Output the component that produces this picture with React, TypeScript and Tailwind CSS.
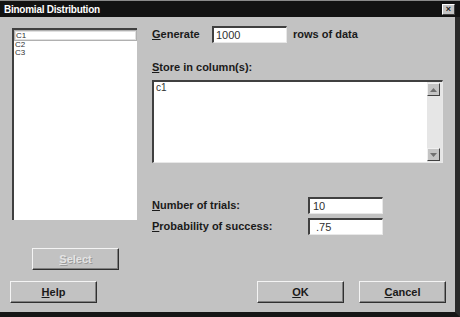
import React from "react"

const font = { fontFamily: '"Liberation Sans", Arial, sans-serif' }

const Sunken: React.FC<{ className?: string; children?: React.ReactNode }> = ({ className, children }) => (
    <div className={`border-t-2 border-l-2 border-t-[#404040] border-l-[#404040] border-b border-r border-b-[#e8e8e8] border-r-[#e8e8e8] bg-white ${className ?? ''}`}>
        {children}
    </div>
)

const Button: React.FC<{ label: string; hot: string; disabled?: boolean; className?: string }> = ({ label, hot, disabled, className }) => (
    <div className={`h-[22px] w-[87px] flex items-center justify-center border border-t-[#f4f4f4] border-l-[#f4f4f4] border-b-[#303030] border-r-[#303030] shadow-[inset_-1px_-1px_0_#808080] text-[11px] font-bold ${disabled ? 'text-[#e4e4e4] [text-shadow:1px_1px_0_#9a9a9a]' : 'text-[#1a1a1a]'} ${className ?? ''}`}>
        <span><span className="underline">{hot}</span>{label}</span>
    </div>
)

const Label: React.FC<{ hot: string; text: string; className?: string }> = ({ hot, text, className }) => (
    <span className={`text-[11px] font-bold text-[#1a1a1a] ${className ?? ''}`}><span className="underline">{hot}</span>{text}</span>
)

const ScrollArrow: React.FC<{ up?: boolean }> = ({ up }) => (
    <div className="w-[13px] h-[13px] bg-[#c4c4c4] border border-t-[#f0f0f0] border-l-[#f0f0f0] border-b-[#404040] border-r-[#404040] flex items-center justify-center">
        <svg width="7" height="4" viewBox="0 0 7 4">
            <path d={up ? "M3.5 0 L7 4 L0 4 Z" : "M0 0 L7 0 L3.5 4 Z"} fill="#707070" />
        </svg>
    </div>
)

export default function App() {
    return (
        <div style={font} className="w-[460px] h-[317px] bg-[#c2c2c2] flex flex-col overflow-hidden">
            <div className="h-[17px] shrink-0 bg-[#121212] flex items-center justify-between pl-[4px] pr-[5px] border-t border-t-[#8a8a8a]">
                <span className="text-white text-[10px] font-bold tracking-tight">Binomial Distribution</span>
                <div className="w-[13px] h-[11px] bg-[#c4c4c4] border border-t-white border-l-white border-b-[#404040] border-r-[#404040] flex items-center justify-center text-[9px] leading-none font-bold text-[#222]">×</div>
            </div>
            <div className="flex-1 flex border-r-[5px] border-r-[#2a2a2a] border-b-[5px] border-b-[#161616]">
                <div className="flex-1 flex flex-col pt-[9px]">
                    <div className="flex">
                        <div className="w-[139px] pl-[12px] flex flex-col">
                            <div className="mt-[2px] h-[192px] w-[125px] border-l-2 border-t-2 border-l-[#404040] border-t-[#404040] bg-white">
                                <div className="mx-[1px] mt-[1px] h-[9px] border border-[#e0e0e0] bg-white shadow-[0_0_0_1px_#b0b0b0] flex items-center">
                                    <span className="text-[8px] leading-none text-[#303030]">C1</span>
                                </div>
                                <div className="mt-[1px] text-[8px] leading-[8px] text-[#303030] pl-[1px]">C2</div>
                                <div className="text-[8px] leading-[8px] text-[#303030] pl-[1px]">C3</div>
                            </div>
                            <Button label="elect" hot="S" disabled className="mt-[28px] ml-[20px]" />
                        </div>
                        <div className="ml-[13px] flex flex-col">
                            <div className="flex items-center h-[17px]">
                                <Label hot="G" text="enerate" className="w-[60px]" />
                                <Sunken className="w-[75px] h-[17px] flex items-center pl-[2px]">
                                    <span className="text-[11px] text-[#303030]">1000</span>
                                </Sunken>
                                <span className="ml-[6px] text-[11px] font-bold text-[#1a1a1a]">rows of data</span>
                            </div>
                            <Label hot="S" text="tore in column(s):" className="mt-[18px] leading-[13px]" />
                            <Sunken className="mt-[6px] w-[291px] h-[83px] flex">
                                <div className="flex-1 pl-[2px] text-[10px] leading-[12px] text-[#303030]">c1</div>
                                <div className="w-[15px] bg-[#e6e6e6] flex flex-col justify-between pb-[1px] pt-[1px] pr-[1px]">
                                    <ScrollArrow up />
                                    <ScrollArrow />
                                </div>
                            </Sunken>
                            <div className="mt-[34px] flex items-center h-[17px]">
                                <Label hot="N" text="umber of trials:" className="w-[156px]" />
                                <Sunken className="w-[75px] h-[17px] flex items-center pl-[3px]">
                                    <span className="text-[11px] text-[#303030]">10</span>
                                </Sunken>
                            </div>
                            <div className="mt-[4px] flex items-center h-[17px]">
                                <Label hot="P" text="robability of success:" className="w-[156px]" />
                                <Sunken className="w-[75px] h-[17px] flex items-center pl-[6px]">
                                    <span className="text-[11px] text-[#303030]">.75</span>
                                </Sunken>
                            </div>
                        </div>
                    </div>
                    <div className="flex mt-[11px] pl-[10px]">
                        <Button label="elp" hot="H" />
                        <Button label="K" hot="O" className="ml-[160px]" />
                        <Button label="ancel" hot="C" className="ml-[15px]" />
                    </div>
                </div>
            </div>
        </div>
    )
}
